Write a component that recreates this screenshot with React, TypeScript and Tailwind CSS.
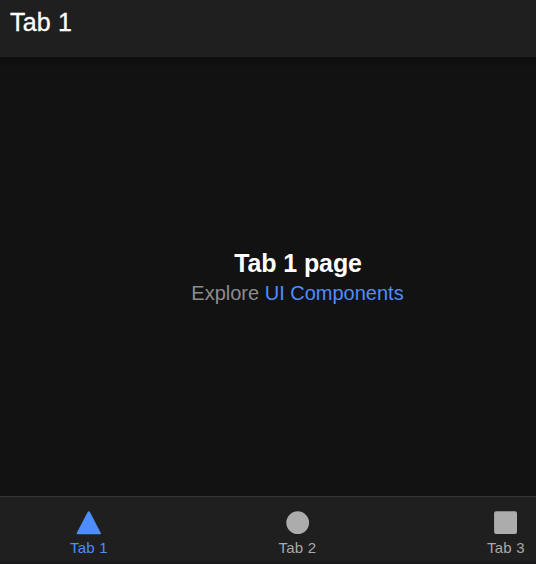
export default function App() {
  return (
    <div className="flex h-[564px] w-[536px] flex-col overflow-hidden bg-[#121212] font-['Liberation_Sans',Arial,sans-serif]">
      <header className="z-10 h-[57px] shrink-0 bg-[#1f1f1f] pl-[10px] pt-[7px]">
        <h1 className="text-[25px] leading-[30px] tracking-[0.2px] text-white [-webkit-text-stroke:0.3px_white]">Tab 1</h1>
      </header>
      <div className="h-[11px] shrink-0 bg-linear-to-b from-[#0d0d0d] to-[#121212]" />
      <main className="flex-1 pl-[60px] pt-[179px] text-center">
        <h2 className="text-[25px] font-bold leading-[32px] tracking-[-0.1px] text-white">Tab 1 page</h2>
        <p className="-ml-px pt-px text-[20px] leading-[27px] text-[#8c8c8c]">
          Explore <a className="text-[#4d8dff]">UI Components</a>
        </p>
      </main>
      <nav className="flex h-[66px] w-[626px] shrink-0 border-t border-[#353535] bg-[#1f1f1f] text-[15px] leading-[18px] tracking-[0.25px] text-[#a8a8a8]">
        <div className="flex w-[178px] flex-col items-center pt-[13px] text-[#4d8dff]">
          <svg width="26" height="26" viewBox="0 0 26 26" fill="currentColor"><path d="M11.8 1.8Q12.8 .5 13.8 1.8L24.8 23Q25.2 24.3 24 24.3H1.5Q.3 24.3.7 23Z" /></svg>
          <span className="mt-[3px]">Tab 1</span>
        </div>
        <div className="flex w-[239px] flex-col items-center pt-[13px]">
          <svg width="26" height="26" viewBox="0 0 26 26" fill="#acacac"><circle cx="12.7" cy="12.7" r="11.4" /></svg>
          <span className="mt-[3px]">Tab 2</span>
        </div>
        <div className="flex w-[178px] flex-col items-center pt-[13px]">
          <svg width="26" height="26" viewBox="0 0 26 26" fill="#acacac"><rect x="1.1" y="1.2" width="22.9" height="22.9" rx="2" /></svg>
          <span className="mt-[3px]">Tab 3</span>
        </div>
      </nav>
      <div className="h-[2px] shrink-0 bg-[#1d181b]" />
    </div>
  );
}
